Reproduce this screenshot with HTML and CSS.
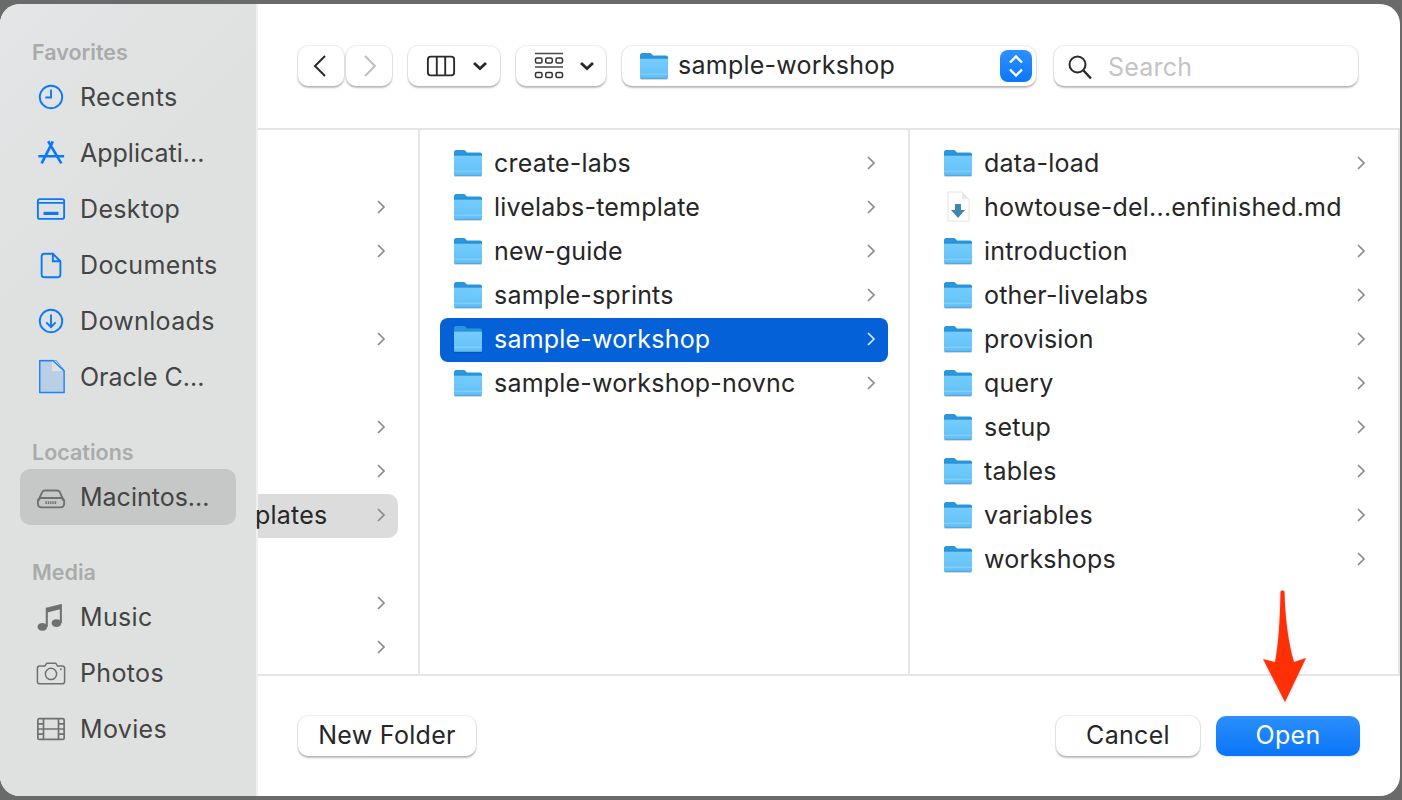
FILE: index.html
```html
<!DOCTYPE html>
<html lang="en">
<head>
<meta charset="utf-8">
<title>Open dialog</title>
<link rel="stylesheet" href="styles.css">
</head>
<body>
<svg class="defs" width="0" height="0" aria-hidden="true">
  <defs>
    <linearGradient id="fb" x1="0" y1="0" x2="0" y2="1"><stop offset="0" stop-color="#74cdfc"/><stop offset="1" stop-color="#63bff7"/></linearGradient>
    <symbol id="folder" viewBox="0 0 30 28">
      <path d="M1 5V3C1 2 2 1 3 1h7.600c.9 0 1.400.3 2 1l1.400 1.600H27c1.200 0 2 .8 2 2V9H1z" fill="#2b96dc"/>
      <path d="M1 6.200h28V25c0 1.200-.8 2-2 2H3c-1.200 0-2-.8-2-2z" fill="url(#fb)"/>
      <path d="M1 5.600h28v.9H1z" fill="#1f8ad2"/>
      <path d="M1 21.800h28v.8H1z" fill="#8fd8fc"/>
      <path d="M1 25.800c.2.800 1 1.200 2 1.200h24c1 0 1.800-.4 2-1.200z" fill="#55a9de"/>
      <path d="M1.500 27.500h27" stroke="#000" stroke-opacity=".16" stroke-width="1"/>
    </symbol>
    <symbol id="chev" viewBox="0 0 12 16"><path d="M3 2l6 6-6 6" fill="none" stroke="#8a8a8a" stroke-width="1.700"/></symbol>
  </defs>
</svg>
<div class="window">
  <aside class="sidebar">
    <h2 class="side-head side-first">Favorites</h2>
    <div class="side-item"><svg class="side-ico blue" viewBox="0 0 32 32"><circle cx="16" cy="16" r="12" /><path d="M16 8v8.500h-6"/></svg><span>Recents</span></div>
    <div class="side-item"><svg class="side-ico blue" viewBox="0 0 32 32"><path d="M18 3.500L6 27M13 3.500L27 27" stroke-width="2.800"/><path d="M2.500 19.500H30" stroke-width="2.600"/></svg><span class="trunc">Applicati...</span></div>
    <div class="side-item"><svg class="side-ico blue" viewBox="0 0 32 32"><rect x="2" y="5.500" width="28" height="21" rx="2"/><path d="M2 9.500h28"/><rect x="8" y="19" width="16" height="3.400" fill="#0a78fa" stroke="none"/></svg><span>Desktop</span></div>
    <div class="side-item"><svg class="side-ico blue" viewBox="0 0 32 32"><path d="M6 7c0-2 1-3 3-3h9l8 8v14c0 2-1 3-3 3H9c-2 0-3-1-3-3z"/><path d="M18 4v8h8"/></svg><span>Documents</span></div>
    <div class="side-item"><svg class="side-ico blue" viewBox="0 0 32 32"><circle cx="16" cy="16" r="12"/><path d="M16 9v13M11 17.500l5 5 5-5"/></svg><span>Downloads</span></div>
    <div class="side-item"><svg class="side-ico-file" viewBox="0 0 32 38"><path d="M4 1.500h17l9 11v23H4z" fill="#b9cfe6" stroke="#1a83f7" stroke-width="1.500"/><path d="M17 1.500h4l9 11h-13z" fill="#e0e2e2"/><path d="M18 1.500l12 11" stroke="#1a83f7" stroke-width="1.500"/><path d="M4 1.500h15" stroke="#1a83f7" stroke-width="1.500"/></svg><span class="trunc">Oracle C...</span></div>

    <h2 class="side-head side-gap">Locations</h2>
    <div class="side-item selected"><svg class="side-ico gray" viewBox="0 0 32 32"><path d="M2.500 20l4-9c.7-1.500 1.500-2 3-2h13c1.500 0 2.300.5 3 2l4 9"/><rect x="2" y="17" width="28" height="10" rx="3.500"/><path d="M10 22h12" stroke-dasharray="1.500 1" stroke-width="3"/></svg><span class="trunc">Macintos...</span></div>

    <h2 class="side-head side-gap">Media</h2>
    <div class="side-item"><svg class="side-ico gray" viewBox="0 0 32 32"><path d="M11 6l16-4v5.500L11 11.500z" fill="#6f7070" stroke="none"/><path d="M11.500 6v20.500M26.500 2.500v20" stroke-width="2.200"/><ellipse cx="6.800" cy="26.500" rx="5.200" ry="4.200" fill="#6f7070" stroke="none"/><ellipse cx="21.800" cy="22.500" rx="5.200" ry="4.200" fill="#6f7070" stroke="none"/></svg><span>Music</span></div>
    <div class="side-item"><svg class="side-ico gray" viewBox="0 0 32 32"><path d="M1.500 11c0-1.500 1-2.500 2.500-2.500h5.500l2-3h9.500l2 3h5c1.500 0 2.500 1 2.500 2.500v14c0 1.500-1 2.500-2.500 2.500H4c-1.500 0-2.500-1-2.500-2.500z" stroke-width="1.600"/><circle cx="16" cy="17" r="6" stroke-width="1.600"/><circle cx="26.500" cy="12" r="1" fill="#6f7070" stroke="none"/></svg><span>Photos</span></div>
    <div class="side-item"><svg class="side-ico gray" viewBox="0 0 32 32"><rect x="2" y="5" width="28" height="22" rx="1.500" stroke-width="1.800"/><path d="M8 5v22M24 5v22M8 16h16M2 10.500h6M2 16h6M2 21.500h6M24 10.500h6M24 16h6M24 21.500h6" stroke-width="1.800"/></svg><span>Movies</span></div>
  </aside>

  <main class="main">
    <header class="toolbar">
      <div class="btn nav"><svg class="tb-ico back" viewBox="0 0 16 24"><path d="M13 2L3 12l10 10" fill="none" stroke="#2a2a2a" stroke-width="2"/></svg></div>
      <div class="btn nav"><svg class="tb-ico fwd" viewBox="0 0 16 24"><path d="M3 2l10 10L3 22" fill="none" stroke="#bdbdbd" stroke-width="2"/></svg></div>
      <div class="btn view">
        <svg class="view-ico" viewBox="0 0 32 24"><rect x="2" y="2" width="28" height="20" rx="3" fill="none" stroke="#2a2a2a" stroke-width="2"/><path d="M11.500 2v20M20.500 2v20" stroke="#2a2a2a" stroke-width="2"/></svg>
        <svg class="caret" viewBox="0 0 16 10"><path d="M2 2l6 5.500L14 2" fill="none" stroke="#2a2a2a" stroke-width="2.800"/></svg>
      </div>
      <div class="btn group">
        <svg class="view-ico" viewBox="0 0 30 28"><path d="M1 1.500h28M1 15h28" stroke="#4a4a4a" stroke-width="1.600"/><g fill="none" stroke="#333" stroke-width="1.500"><rect x="1.500" y="6" width="6.500" height="5" rx="1.500"/><rect x="11.750" y="6" width="6.500" height="5" rx="1.500"/><rect x="22" y="6" width="6.500" height="5" rx="1.500"/><rect x="1.500" y="20.500" width="6.500" height="5" rx="1.500"/><rect x="11.750" y="20.500" width="6.500" height="5" rx="1.500"/><rect x="22" y="20.500" width="6.500" height="5" rx="1.500"/></g></svg>
        <svg class="caret" viewBox="0 0 16 10"><path d="M2 2l6 5.500L14 2" fill="none" stroke="#2a2a2a" stroke-width="2.800"/></svg>
      </div>
      <div class="btn path">
        <svg class="path-folder"><use href="#folder"/></svg>
        <span class="path-label">sample-workshop</span>
        <span class="stepper"><svg viewBox="0 0 20 28" class="stepper-ico"><path d="M4 10.500l6-6 6 6M4 17.500l6 6 6-6" fill="none" stroke="#fff" stroke-width="2.400"/></svg></span>
      </div>
      <div class="btn search">
        <svg class="search-ico" viewBox="0 0 26 26"><circle cx="10.500" cy="10.500" r="8" fill="none" stroke="#2a2a2a" stroke-width="2"/><path d="M16.500 16.500l7.500 8" stroke="#2a2a2a" stroke-width="2.400"/></svg>
        <span class="search-text">Search</span>
      </div>
    </header>

    <section class="browser">
      <div class="col col-a">
        <div class="row spacer"></div>
        <div class="row"><svg class="chev"><use href="#chev"/></svg></div>
        <div class="row"><svg class="chev"><use href="#chev"/></svg></div>
        <div class="row spacer"></div>
        <div class="row"><svg class="chev"><use href="#chev"/></svg></div>
        <div class="row spacer"></div>
        <div class="row"><svg class="chev"><use href="#chev"/></svg></div>
        <div class="row"><svg class="chev"><use href="#chev"/></svg></div>
        <div class="row parent"><span class="clip">plates</span><svg class="chev"><use href="#chev"/></svg></div>
        <div class="row spacer"></div>
        <div class="row"><svg class="chev"><use href="#chev"/></svg></div>
        <div class="row"><svg class="chev"><use href="#chev"/></svg></div>
      </div>
      <div class="col col-b">
        <div class="row"><svg class="folder"><use href="#folder"/></svg><span class="name">create-labs</span><svg class="chev"><use href="#chev"/></svg></div>
        <div class="row"><svg class="folder"><use href="#folder"/></svg><span class="name">livelabs-template</span><svg class="chev"><use href="#chev"/></svg></div>
        <div class="row"><svg class="folder"><use href="#folder"/></svg><span class="name">new-guide</span><svg class="chev"><use href="#chev"/></svg></div>
        <div class="row"><svg class="folder"><use href="#folder"/></svg><span class="name">sample-sprints</span><svg class="chev"><use href="#chev"/></svg></div>
        <div class="row active"><svg class="folder"><use href="#folder"/></svg><span class="name">sample-workshop</span><svg class="chev" viewBox="0 0 12 16"><path d="M3 2l6 6-6 6" fill="none" stroke="#dbe8fb" stroke-width="1.700"/></svg></div>
        <div class="row"><svg class="folder"><use href="#folder"/></svg><span class="name">sample-workshop-novnc</span><svg class="chev"><use href="#chev"/></svg></div>
      </div>
      <div class="col col-c">
        <div class="row"><svg class="folder"><use href="#folder"/></svg><span class="name">data-load</span><svg class="chev"><use href="#chev"/></svg></div>
        <div class="row"><svg class="folder md" viewBox="0 0 30 32"><path d="M5 1h14l7 7v22H5z" fill="#fff" stroke="#e4e4e4"/><path d="M19 1v7h7z" fill="#e8e8e8"/><path d="M12 13h6v6h4l-7 8-7-8h4z" fill="#3f87ad"/></svg><span class="name">howtouse-del...enfinished.md</span></div>
        <div class="row"><svg class="folder"><use href="#folder"/></svg><span class="name">introduction</span><svg class="chev"><use href="#chev"/></svg></div>
        <div class="row"><svg class="folder"><use href="#folder"/></svg><span class="name">other-livelabs</span><svg class="chev"><use href="#chev"/></svg></div>
        <div class="row"><svg class="folder"><use href="#folder"/></svg><span class="name">provision</span><svg class="chev"><use href="#chev"/></svg></div>
        <div class="row"><svg class="folder"><use href="#folder"/></svg><span class="name">query</span><svg class="chev"><use href="#chev"/></svg></div>
        <div class="row"><svg class="folder"><use href="#folder"/></svg><span class="name">setup</span><svg class="chev"><use href="#chev"/></svg></div>
        <div class="row"><svg class="folder"><use href="#folder"/></svg><span class="name">tables</span><svg class="chev"><use href="#chev"/></svg></div>
        <div class="row"><svg class="folder"><use href="#folder"/></svg><span class="name">variables</span><svg class="chev"><use href="#chev"/></svg></div>
        <div class="row"><svg class="folder"><use href="#folder"/></svg><span class="name">workshops</span><svg class="chev"><use href="#chev"/></svg></div>
      </div>
    </section>

    <footer class="footer">
      <div class="btn text-btn new-folder">New Folder</div>
      <div class="footer-right">
        <div class="btn text-btn cancel">Cancel</div>
        <div class="btn text-btn open">Open</div>
      </div>
    </footer>
  </main>
  <svg class="arrow" viewBox="0 0 50 116"><path d="M20.500 5c0-2 4-2 4 0C25 28 28 55 34 75l12-4-21 44L3 72l12 3c4-20 5-47 5.500-70z" fill="#ff2f06"/></svg>
</div>
</body>
</html>
```

FILE: styles.css
```css
* { box-sizing: border-box; }
html, body { margin: 0; height: 100%; }
body {
  background: #6a6a6a;
  padding: 4px 2px 4px 0;
  font-family: Inter, "Liberation Sans", sans-serif;
  font-size: 25px;
  letter-spacing: .2px;
  color: #262626;
  overflow: hidden;
}
.defs { position: absolute; }
.window {
  position: relative;
  display: flex;
  width: 1400px;
  height: 792px;
  background: #fff;
  border-radius: 20px;
  overflow: hidden;
}

/* sidebar */
.sidebar {
  flex: 0 0 258px;
  padding: 36px 20px 0;
  background: linear-gradient(135deg, #e4e5e6, #dfe1e1 30%, #dfe1e1);
  border-right: 2px solid #f0f0f0;
  color: #444;
  letter-spacing: .35px;
}
.side-head {
  margin: 0 0 5px 12px;
  height: 24px;
  line-height: 24px;
  font-size: 21.500px;
  font-weight: 600;
  letter-spacing: 0;
  color: #a9abab;
}
.side-gap { margin-top: 35px; }
.side-item {
  display: flex;
  align-items: center;
  height: 56px;
  padding-left: 16px;
  border-radius: 10px;
  white-space: nowrap;
}
.side-item span { margin-left: 14px; }
.side-item .trunc { letter-spacing: 0; }
.side-item.selected { background: #c6c8c8; }
.side-ico {
  flex: 0 0 30px;
  width: 30px;
  height: 30px;
  fill: none;
  stroke-width: 2;
}
.side-ico.blue { stroke: #0a78fa; }
.side-ico.gray { stroke: #6f7070; }
.side-ico-file { flex: 0 0 30px; width: 30px; height: 36px; }

/* main */
.main { flex: 1; min-width: 0; display: flex; flex-direction: column; }
.toolbar {
  flex: 0 0 126px;
  display: flex;
  align-items: flex-start;
  gap: 16px;
  padding: 42px 40px 0;
  border-bottom: 2px solid #e6e6e6;
}
.btn {
  display: flex;
  align-items: center;
  height: 40px;
  background: #fff;
  border-radius: 10px;
  box-shadow: 0 0 0 1px rgba(0,0,0,.05), 0 1.500px 2px rgba(0,0,0,.25);
}
.nav { width: 46px; justify-content: center; }
.nav + .nav { margin-left: -14px; }
.tb-ico { width: 16px; height: 24px; }
.back { margin-right: 2px; }
.fwd { margin-left: 2px; }
.view { width: 92px; padding-left: 18px; gap: 16px; }
.group { width: 90px; padding-left: 18px; gap: 15px; }
.view-ico { width: 32px; height: 28px; flex: 0 0 30px; }
.caret { width: 16px; height: 10px; flex: 0 0 16px; }
.path { width: 414px; padding-left: 17px; }
.path-folder { width: 30px; height: 28px; flex: 0 0 30px; }
.path-label { margin: 0 0 2px 9px; flex: 1; letter-spacing: .25px; }
.stepper {
  display: flex;
  align-items: center;
  justify-content: center;
  width: 32px;
  height: 32px;
  margin-right: 4px;
  border-radius: 8px;
  background: linear-gradient(#2e90fb, #0a78fa);
}
.stepper-ico { width: 20px; height: 28px; }
.search { width: 304px; margin-left: 2px; padding-left: 13px; }
.search-ico { width: 26px; height: 26px; flex: 0 0 26px; margin-top: 1px; }
.search-text { margin: 2px 0 0 15px; color: #c4c4c4; }

/* browser */
.browser {
  flex: 0 0 546px;
  display: flex;
  border-bottom: 2px solid #e6e6e6;
}
.col { padding-top: 12px; border-right: 2px solid #e6e6e6; }
.col-a { flex: 0 0 162px; }
.col-b { flex: 0 0 490px; padding-left: 20px; padding-right: 20px; }
.col-c { flex: 0 0 490px; padding-left: 20px; padding-right: 20px; }
.row {
  display: flex;
  align-items: center;
  height: 44px;
  padding: 0 10px 2px 13px;
  border-radius: 8px;
  white-space: nowrap;
}
.col-a .row { width: 140px; padding-left: 0; border-radius: 0 10px 10px 0; }
.col-a .chev { margin-left: auto; }
.parent { background: #dcdcdc; }
.clip { display: block; width: 100px; margin-left: -3px; overflow: hidden; }
.folder { flex: 0 0 30px; width: 30px; height: 28px; }
.md { height: 32px; }
.name { margin-left: 11px; flex: 1; }
.chev { flex: 0 0 12px; width: 12px; height: 16px; margin-right: 1px; }
.active { background: #0461d8; color: #fff; }

/* footer */
.footer {
  flex: 1;
  display: flex;
  justify-content: space-between;
  align-items: flex-start;
  padding: 40px 40px 0;
}
.footer-right { display: flex; gap: 16px; }
.text-btn { justify-content: center; padding-bottom: 2px; letter-spacing: .3px; }
.new-folder { width: 178px; }
.cancel { width: 144px; }
.open {
  width: 144px;
  color: #fff;
  background: linear-gradient(#2b8ffb, #0a75fa);
  box-shadow: 0 1px 2px rgba(0,0,0,.12);
}

/* annotation arrow */
.arrow { position: absolute; left: 1260px; top: 583px; width: 50px; height: 116px; filter: drop-shadow(0 1px 1px rgba(0,0,0,.2)); }
```
